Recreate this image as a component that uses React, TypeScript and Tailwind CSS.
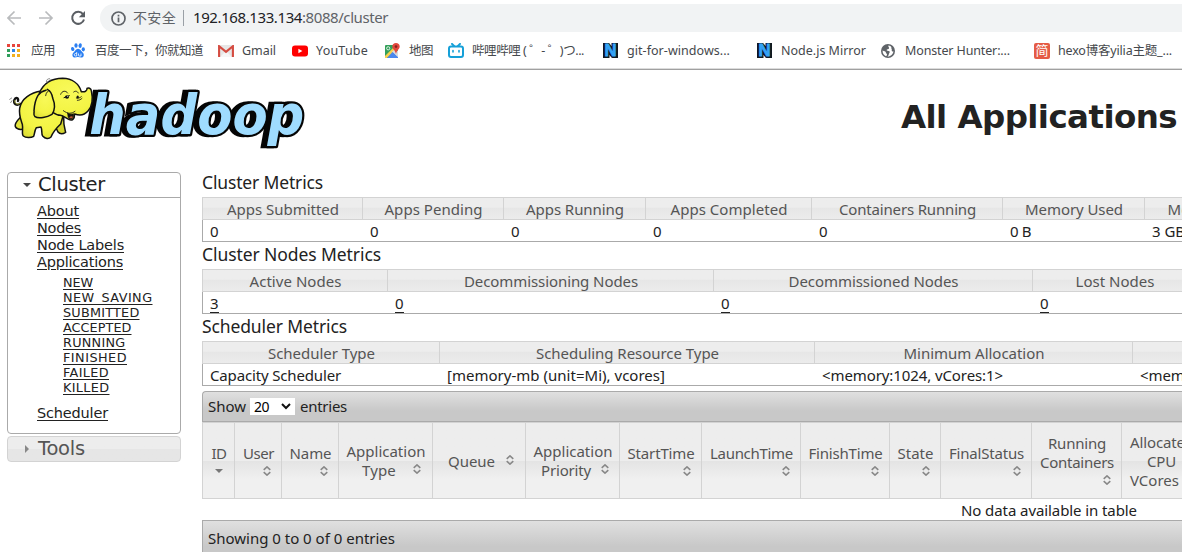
import { useLayoutEffect, useRef, useState } from "react";
import type { ReactNode } from "react";

/* Text set to a given advance width by spreading its letters. */
function Fit({ children, w, className = "" }: { children: string; w: number; className?: string }) {
  const ref = useRef<HTMLSpanElement>(null);
  const [gap, setGap] = useState(0);
  useLayoutEffect(() => {
    const el = ref.current;
    if (!el) return;
    const n = Array.from(children).length;
    setGap((w - el.getBoundingClientRect().width) / n);
  }, [children, w]);
  return (
    <span ref={ref} className={`inline-block whitespace-pre ${className}`} style={{ letterSpacing: `${gap}px` }}>
      {children}
    </span>
  );
}

function Elephant() {
  return (
    <g stroke="#111" strokeWidth="4.5" strokeLinejoin="round" strokeLinecap="round">
      <path d="M60 116C50 124 40 116 43 105C47 95 57 99 54 108" fill="none" stroke="#111" strokeWidth="7" />
      <path d="M60 115C51 121 42 115 45 106" fill="none" stroke="#e3e448" strokeWidth="2" />
      <path d="M60 158C50 168 43 176 46 185C51 194 62 195 76 191L80 166Z" fill="#e3e43c" />
      <path d="M160 172L174 201C181 209 192 205 197 202C194 191 190 181 191 155Z" fill="#d4d530" />
      <path d="M124 78C92 83 64 101 59 130C56 149 62 162 67 178C70 192 64 208 70 213C77 219 93 219 101 214C104 206 104 196 109 188L123 186C128 197 123 207 128 213C136 222 146 223 153 216C157 206 166 192 182 177L190 150L164 79Z" fill="url(#hide)" />
      <path d="M118 84C131 55 156 40 188 40C216 41 237 56 244 80C254 82 262 78 261 70C265 67 273 70 274 77C280 105 277 124 264 138C253 151 238 152 224 147C224 163 216 168 206 163C198 160 191 152 181 151C173 151 167 148 158 142Z" fill="url(#hide)" />
      <path d="M142 73C150 77 156 86 158 99C165 116 165 135 156 148C142 156 116 163 105 155C98 148 104 144 102 137C103 120 107 103 114 91C117 87 126 79 138 76" fill="url(#hide)" />
      <path d="M137 92C138 83 143 77 149 77M182 88C186 76 198 76 203 84M221 81C227 76 232 79 235 84M229 99C235 100 240 99 244 95M232 106C238 106 242 104 246 100M190 137C204 148 215 146 225 139" fill="none" strokeWidth="2.5" />
      <path d="M203 145C204 154 204 160 209 163C218 163 222 157 221 146C216 148 208 148 203 145Z" fill="#151510" strokeWidth="2" />
      <path d="M208 158C211 153 217 153 219 156C217 161 211 161 208 158Z" fill="#bd5534" stroke="none" />
      <ellipse cx="201" cy="96" rx="6" ry="5" fill="#111" stroke="none" />
      <ellipse cx="233" cy="96" rx="3.5" ry="4.5" fill="#111" stroke="none" />
      <path d="M192 98L208 92" fill="none" strokeWidth="3" />
      <circle cx="203" cy="94" r="1.5" fill="#fff" stroke="none" />
      <path d="M139 50C139 44 143 41 149 41M143 53C144 48 147 46 152 45M29 103L35 99M32 113L36 107" fill="none" stroke="#555" strokeWidth="2" />
    </g>
  );
}

function Logo() {
  return (
    <svg width="320" height="85" viewBox="0 15 960 255" role="img" aria-label="hadoop" className="shrink-0">
      <defs>
        <radialGradient id="hide" cx="0.55" cy="0.3" r="0.8">
          <stop offset="0" stopColor="#f8f95a" />
          <stop offset="0.65" stopColor="#f3f444" />
          <stop offset="1" stopColor="#dadb34" />
        </radialGradient>
      </defs>
      <g className="font-['DejaVu_Sans'] text-[164px] font-bold italic">
        <text x="257" y="207" textLength="643" lengthAdjust="spacingAndGlyphs" fill="#050505" stroke="#050505" strokeWidth="14" strokeLinejoin="miter">hadoop</text>
        <text x="268" y="207" textLength="645" lengthAdjust="spacingAndGlyphs" fill="#9fdcff" stroke="#050505" strokeWidth="14" strokeLinejoin="round" paintOrder="stroke">hadoop</text>
      </g>
      <Elephant />
    </svg>
  );
}

const appColors = ["#e8453c", "#e8453c", "#e8453c", "#2e9e5b", "#2f86e8", "#f2b01e", "#2e9e5b", "#f2b01e", "#f2b01e"];

const icons: Record<string, ReactNode> = {
  apps: (
    <svg width="14" height="14" viewBox="0 0 14 14">
      {appColors.map((c, i) => (
        <rect key={i} x={(i % 3) * 5} y={Math.floor(i / 3) * 5} width="3" height="3" fill={c} />
      ))}
    </svg>
  ),
  baidu: (
    <svg width="14" height="15" viewBox="0 0 14 15" fill="#2b7ff2">
      <ellipse cx="5" cy="2.5" rx="1.6" ry="2.3" />
      <ellipse cx="9.2" cy="2.6" rx="1.6" ry="2.3" transform="rotate(10 9 2.6)" />
      <ellipse cx="1.7" cy="6" rx="1.6" ry="2" transform="rotate(-15 1.7 6)" />
      <ellipse cx="12.3" cy="6.3" rx="1.6" ry="2.1" />
      <path d="M7 5.7C4.8 5.7 4.3 8 2.7 9.2C.8 10.7 1 14 3.4 14.4C5 14.6 5.6 14.1 7 14.1S9.3 14.7 11 14.4C13.3 13.9 13.3 10.8 11.7 9.4C10 8 9.3 5.7 7 5.7Z" />
      <path d="M5.7 9V13H4.5C2.8 13 2.9 10.5 4.5 10.5H5.7M7.5 10.5V12.2Q7.5 13 8.3 13H10V10.5" fill="none" stroke="#fff" strokeWidth=".8" />
    </svg>
  ),
  gmail: (
    <svg width="16" height="12" viewBox="0 0 16 12">
      <rect width="16" height="12" rx="1" fill="#e7e7e7" />
      <path d="M2 12L8 6L14 12Z" fill="#f6f6f6" />
      <path d="M1.1 12V1.2L8 6.8L14.9 1.2V12" fill="none" stroke="#d54b40" strokeWidth="2.1" />
    </svg>
  ),
  youtube: (
    <svg width="16" height="12" viewBox="0 0 16 12">
      <rect y=".5" width="16" height="11" rx="3" fill="#f00" />
      <path d="M6.4 3.7L10.4 6L6.4 8.3Z" fill="#fff" />
    </svg>
  ),
  maps: (
    <svg width="15" height="16" viewBox="0 0 15 16">
      <rect x="0" y="2" width="13" height="13" rx="1" fill="#34a05a" />
      <path d="M0 13L10 3L13 5L2 15H0Z" fill="#f7d04c" />
      <path d="M7 8.8L13 15V8L10 6Z" fill="#d9dcdf" />
      <path d="M2 15L7.5 9L13 14.2V15Z" fill="#4a87ee" />
      <circle cx="3.2" cy="5.3" r="1.6" fill="none" stroke="#fff" strokeWidth=".8" />
      <path d="M11 0C8.8 0 7.3 1.5 7.3 3.5C7.3 6 10.2 7 11 11C11.8 7 14.7 6 14.7 3.5C14.7 1.5 13.2 0 11 0Z" fill="#e2483d" />
      <circle cx="11" cy="3.6" r="1.3" fill="#85221c" />
    </svg>
  ),
  bili: (
    <svg width="16" height="15" viewBox="0 0 16 15" fill="none" stroke="#16a0d8" strokeWidth="2" strokeLinecap="round">
      <path d="M4 .9L6 3M12 .9L10 3" />
      <rect x="1" y="3.5" width="14" height="10.5" rx="2" />
      <path d="M5 7.6V9M11 7.6V9" strokeWidth="1.6" />
    </svg>
  ),
  n: (
    <svg width="15" height="15" viewBox="0 0 15 15">
      <path d="M1 0H5.5L9 4V0H14L15 1V14L14 15H9.5L6 11V15H1L0 14V1Z" fill="#101820" stroke="#101820" />
      <text x="7.5" y="13.2" textAnchor="middle" textLength="12" lengthAdjust="spacingAndGlyphs" className="font-['Liberation_Sans'] text-[16px] font-bold" fill="#35a3f5" stroke="#35a3f5" strokeWidth=".8">N</text>
    </svg>
  ),
  globe: (
    <svg width="14" height="14" viewBox="0 0 14 14">
      <circle cx="7" cy="7" r="7" fill="#5f6368" />
      <path d="M7.4 1.6C6.8 3 8.4 3.3 8 4.4C7.5 5.4 5.8 4.8 5.6 6C5.4 7 7.5 6.6 8.4 7.3C9.5 8.3 7.8 9.2 7.8 10.3C7.7 11.5 7 12.2 6.5 12.4C7.8 12.7 12.3 11.2 12.4 7.2C11.3 7.9 10.4 7.1 10.8 6.1C11.1 5.1 10 4.8 10.4 3.6C10.5 3 9.3 1.7 7.4 1.6ZM1.6 6.5C3 7.2 4.8 7.3 5 8.7C5.1 9.7 6.2 9.5 6 10.8C5.9 11.5 5.3 12 5 12.2C2.8 11.3 1.3 9.1 1.6 6.5Z" fill="#fff" />
    </svg>
  ),
  jian: (
    <span className="flex size-4 items-center justify-center rounded-[2px] bg-[#e55b45] text-[13px] leading-none text-white">简</span>
  ),
};

const bookmarks: [string, string, number][] = [
  ["apps", "应用", 24],
  ["baidu", "百度一下，你就知道", 108],
  ["gmail", "Gmail", 34],
  ["youtube", "YouTube", 52],
  ["maps", "地图", 24],
  ["bili", "哔哩哔哩 ( ゜- ゜)つ...", 112],
  ["n", "git-for-windows...", 103],
  ["n", "Node.js Mirror", 85],
  ["globe", "Monster Hunter:...", 105],
  ["jian", "hexo博客yilia主题_...", 114],
];

function Browser() {
  return (
    <div className="h-[70px] border-b border-[#a0a0a0] bg-white font-['Noto_Sans','Noto_Sans_CJK_SC',sans-serif]">
      <div className="flex h-9 items-start">
        <div className="flex h-9 w-[100px] items-center pl-[7px]">
          <svg width="80" height="16" viewBox="0 0 80 16" fill="none" strokeWidth="1.7">
            <path d="M14 8H1.5M7.5 1.5L1 8L7.5 14.5" stroke="#b9bbbd" />
            <path d="M32 8H44.5M38.5 1.5L45 8L38.5 14.5" stroke="#b9bbbd" />
            <path d="M76 4.2A6 6 0 1 0 77 9.5" stroke="#5a5e63" strokeWidth="2" />
            <path d="M78 1V7.2H71.8Z" fill="#5a5e63" />
          </svg>
        </div>
        <div className="mt-1 flex h-7 flex-1 items-center rounded-l-full bg-[#f1f3f4] pl-[11px] text-[15px] leading-5 text-[#5f6368]">
          <svg width="15" height="15" viewBox="0 0 15 15" fill="none" stroke="#5f6368" strokeWidth="1.7">
            <circle cx="7.5" cy="7.5" r="6.5" />
            <path d="M7.5 6.6V11.2M7.5 3.7V5.4" />
          </svg>
          <Fit w={43} className="ml-[7px] text-[14px]">不安全</Fit>
          <span className="ml-[7px] mr-[9px] h-4 w-px bg-[#9aa0a6]" />
          <Fit w={109} className="-mt-0.5 text-[#202124]">192.168.133.134</Fit>
          <Fit w={86} className="-mt-0.5">:8088/cluster</Fit>
        </div>
      </div>
      <div className="box-content grid h-[32px] grid-cols-[64px_147px_74px_93px_63px_155px_154px_124px_153px_148px] items-center border-b border-[#dcdcdc] pl-[7px] text-[12.5px] leading-5 text-[#45484c]">
        {bookmarks.map(([icon, label, w], i) => (
          <div key={i} className="flex items-center whitespace-nowrap pb-[3px]">
            <span className="w-[24px] shrink-0">{icons[icon]}</span>
            <Fit w={w}>{label}</Fit>
          </div>
        ))}
      </div>
    </div>
  );
}

const mainLinks: [string, number][] = [["About", 42], ["Nodes", 44], ["Node Labels", 87], ["Applications", 86]];
const stateLinks: [string, number][] = [
  ["NEW", 30], ["NEW_SAVING", 89.5], ["SUBMITTED", 76.5], ["ACCEPTED", 68.5],
  ["RUNNING", 62.5], ["FINISHED", 64], ["FAILED", 46], ["KILLED", 46.5],
];

function Sidebar() {
  return (
    <nav className="w-[174px] shrink-0 font-['DejaVu_Sans',sans-serif] text-[#222]">
      <div className="h-[262px] rounded border border-[#aaa]">
        <div className="flex h-[25px] items-center border-b border-[#aaa] pl-[15px]">
          <svg width="8" height="4" viewBox="0 0 8 4"><path d="M0 0H8L4 4Z" fill="#454545" /></svg>
          <Fit w={67} className="ml-[7px] text-[19.5px] leading-6">Cluster</Fit>
        </div>
        <ul className="pl-[29px] pt-[5px] text-[14.5px] leading-[17px]">
          {mainLinks.map(([t, w]) => (
            <li key={t} className="h-[17px]"><Fit w={w} className="underline underline-offset-2">{t}</Fit></li>
          ))}
        </ul>
        <ul className="pl-[55px] pt-1 text-[12.8px] leading-[15px]">
          {stateLinks.map(([t, w]) => (
            <li key={t} className="h-[15px]"><Fit w={w} className="underline underline-offset-2">{t}</Fit></li>
          ))}
        </ul>
        <div className="pl-[29px] pt-[10px] text-[14.5px] leading-[17px]">
          <Fit w={71} className="underline underline-offset-2">Scheduler</Fit>
        </div>
      </div>
      <div className="mt-[2px] flex h-[26px] items-center rounded border border-[#d3d3d3] bg-linear-to-b from-[#ededed] from-50% to-[#e6e6e6] to-50% pl-[17px] text-[#555]">
        <svg width="4" height="8" viewBox="0 0 4 8"><path d="M0 0V8L4 4Z" fill="#888" /></svg>
        <Fit w={47} className="ml-[9px] text-[19.5px] leading-6">Tools</Fit>
      </div>
    </nav>
  );
}

type Col = { head: string; hw: number; val: string; vw: number; link?: boolean };

function Metrics({ title, tw, cols, grid }: { title: string; tw: number; cols: Col[]; grid: string }) {
  return (
    <section className="h-[72px]">
      <h3 className="h-[25px] text-[17.5px] leading-[20px]"><Fit w={tw}>{title}</Fit></h3>
      <div className={`grid h-[23px] border-y border-[#d3d3d3] bg-linear-to-b from-[#ededed] from-45% via-[#e6e6e6] via-46% to-[#ececec] text-[#555] ${grid}`}>
        {cols.map((c) => (
          <div key={c.head} className="overflow-hidden whitespace-nowrap border-l border-[#d3d3d3] pl-px text-center leading-[23px]">
            <Fit w={c.hw}>{c.head}</Fit>
          </div>
        ))}
      </div>
      <div className={`grid h-[22px] border-b border-l border-[#aaa] ${grid}`}>
        {cols.map((c) => (
          <div key={c.head} className="whitespace-nowrap pl-[7px] leading-[22px]">
            <Fit w={c.vw} className={c.link ? "underline underline-offset-[3px]" : ""}>{c.val}</Fit>
          </div>
        ))}
      </div>
    </section>
  );
}

function Sort({ className = "" }: { className?: string }) {
  return (
    <svg width="8" height="10" viewBox="0 0 8 10" fill="none" stroke="#888" strokeWidth="1.6" className={`shrink-0 ${className}`}>
      <path d="M.7 3.8L4 .9L7.3 3.8M.7 6.2L4 9.1L7.3 6.2" />
    </svg>
  );
}

function Simple({ label, w, sorted }: { label: string; w: number; sorted?: boolean }) {
  return (
    <div className="flex flex-col items-center border-l border-[#d3d3d3] pl-px pt-[21px]">
      <Fit w={w}>{label}</Fit>
      {sorted ? (
        <svg width="8" height="4" viewBox="0 0 8 4" className="mt-[6px]"><path d="M0 0H8L4 4Z" fill="#777" /></svg>
      ) : (
        <Sort className="mr-[10px] mt-[3px] self-end" />
      )}
    </div>
  );
}

function DataTable() {
  return (
    <section className="mt-[3px]">
      <div className="flex h-[31px] items-center rounded-tl border border-r-0 border-[#aaa] bg-linear-to-b from-[#e0e0e0] to-[#c8c8c8] to-65% pl-[5px]">
        <Fit w={38}>Show</Fit>
        <span className="ml-[4px] flex h-[17px] w-[45px] items-center justify-between bg-white pl-1 pr-[4px] text-[14px] text-black">
          <Fit w={15}>20</Fit>
          <svg width="10" height="7" viewBox="0 0 10 7" fill="none" stroke="#111" strokeWidth="2"><path d="M1 1L5 5L9 1" /></svg>
        </span>
        <Fit w={47} className="ml-[5px]">entries</Fit>
      </div>
      <div className="grid h-[77px] grid-cols-[32px_47px_57px_94px_93px_94px_82px_99px_89px_51px_91px_90px_100px] border-y border-[#d3d3d3] bg-linear-to-b from-[#ededed] from-50% via-[#e4e4e4] via-51% to-[#f0f0f0] to-75% leading-[19px] text-[#555]">
        <Simple label="ID" w={15} sorted />
        <Simple label="User" w={31} />
        <Simple label="Name" w={42} />
        <div className="flex flex-col items-center border-l border-[#d3d3d3] pl-px pt-[19px]">
          <Fit w={79}>Application</Fit>
          <div className="flex self-stretch pl-[22px]"><Fit w={34}>Type</Fit><Sort className="ml-[17px] mt-[3px]" /></div>
        </div>
        <div className="flex border-l border-[#d3d3d3] pl-[15px] pt-[29px]">
          <Fit w={47}>Queue</Fit><Sort className="ml-[11px] mt-[3px]" />
        </div>
        <div className="flex flex-col items-center border-l border-[#d3d3d3] pl-px pt-[19px]">
          <Fit w={79}>Application</Fit>
          <div className="flex self-stretch pl-[14px]"><Fit w={50}>Priority</Fit><Sort className="ml-[10px] mt-[3px]" /></div>
        </div>
        <Simple label="StartTime" w={67} />
        <Simple label="LaunchTime" w={83} />
        <Simple label="FinishTime" w={74} />
        <Simple label="State" w={36} />
        <Simple label="FinalStatus" w={75} />
        <div className="flex flex-col items-center border-l border-[#d3d3d3] pl-px pt-[11px]">
          <Fit w={58}>Running</Fit>
          <Fit w={74}>Containers</Fit>
          <Sort className="mr-[10px] mt-[3px] self-end" />
        </div>
        <div className="flex flex-col border-l border-[#d3d3d3] pl-[8px] pt-[10px]">
          <Fit w={64} className="self-start">Allocated</Fit>
          <Fit w={29} className="ml-[17px] self-start">CPU</Fit>
          <Fit w={49} className="self-start">VCores</Fit>
        </div>
      </div>
      <div className="h-[21px] pl-[759px] leading-[23px]"><Fit w={176}>No data available in table</Fit></div>
      <div className="h-[40px] border-l border-t border-[#aaa] bg-linear-to-b from-[#e0e0e0] to-[#c8c8c8] to-65% pl-[5px] pt-[7px] leading-5">
        <Fit w={187}>Showing 0 to 0 of 0 entries</Fit>
      </div>
    </section>
  );
}

const cluster: Col[] = [
  { head: "Apps Submitted", hw: 112, val: "0", vw: 9 },
  { head: "Apps Pending", hw: 98, val: "0", vw: 9 },
  { head: "Apps Running", hw: 98, val: "0", vw: 9 },
  { head: "Apps Completed", hw: 117, val: "0", vw: 9 },
  { head: "Containers Running", hw: 137, val: "0", vw: 9 },
  { head: "Memory Used", hw: 98, val: "0 B", vw: 21 },
  { head: "Memory Total", hw: 98, val: "3 GB", vw: 33 },
];
const nodes: Col[] = [
  { head: "Active Nodes", hw: 92, val: "3", vw: 9, link: true },
  { head: "Decommissioning Nodes", hw: 174, val: "0", vw: 9, link: true },
  { head: "Decommissioned Nodes", hw: 170, val: "0", vw: 9, link: true },
  { head: "Lost Nodes", hw: 79, val: "0", vw: 9, link: true },
];
const scheduler: Col[] = [
  { head: "Scheduler Type", hw: 107, val: "Capacity Scheduler", vw: 131 },
  { head: "Scheduling Resource Type", hw: 183, val: "[memory-mb (unit=Mi), vcores]", vw: 218 },
  { head: "Minimum Allocation", hw: 141, val: "<memory:1024, vCores:1>", vw: 181 },
  { head: "Maximum Allocation", hw: 144, val: "<memory:3072, vCores:4>", vw: 181 },
];

export default function App() {
  return (
    <div className="h-[552px] w-[1182px] overflow-hidden bg-white text-[#222]">
      <Browser />
      <header className="flex h-[102px] items-start justify-between">
        <Logo />
        <h1 className="mr-[5px] mt-[26px] font-['DejaVu_Sans',sans-serif] text-[32.5px] font-bold leading-[42px]"><Fit w={276}>All Applications</Fit></h1>
      </header>
      <div className="flex pl-[7px]">
        <Sidebar />
        <main className="ml-[21px] w-[980px] shrink-0 overflow-hidden font-['Noto_Sans',sans-serif] text-[15px]">
          <Metrics title="Cluster Metrics" tw={121} cols={cluster} grid="grid-cols-[160px_141px_142px_166px_191px_142px_143px]" />
          <Metrics title="Cluster Nodes Metrics" tw={179} cols={nodes} grid="grid-cols-[185px_326px_319px_164px]" />
          <Metrics title="Scheduler Metrics" tw={145} cols={scheduler} grid="grid-cols-[237px_375px_318px_318px]" />
          <DataTable />
        </main>
      </div>
    </div>
  );
}
